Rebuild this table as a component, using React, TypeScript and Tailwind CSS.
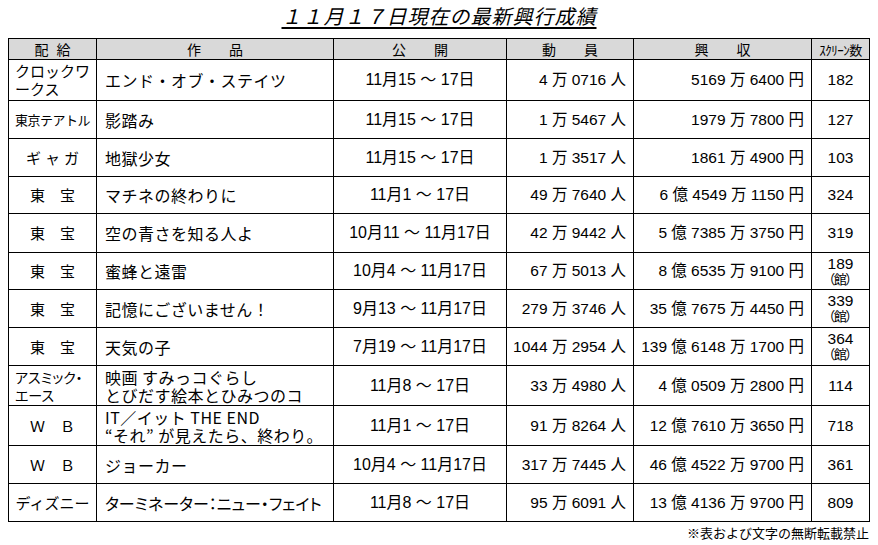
import React from 'react';

// 行データ
type Row = {
  dist: React.ReactNode;
  distLeft?: boolean;
  title: React.ReactNode;
  period: string;
  audience: string;
  gross: string;
  screens: string;
  kan?: boolean;
};

const rows: Row[] = [
  {
    dist: (<>クロックワ<br />ークス</>),
    distLeft: true,
    title: 'エンド・オブ・ステイツ',
    period: '11月15 ～ 17日',
    audience: '4 万 0716 人',
    gross: '5169 万 6400 円',
    screens: '182',
  },
  {
    dist: <span className="text-[13px] tracking-[-0.5px]">東京テアトル</span>,
    title: '影踏み',
    period: '11月15 ～ 17日',
    audience: '1 万 5467 人',
    gross: '1979 万 7800 円',
    screens: '127',
  },
  {
    dist: <span className="tracking-[4px] pl-[4px]">ギャガ</span>,
    title: '地獄少女',
    period: '11月15 ～ 17日',
    audience: '1 万 3517 人',
    gross: '1861 万 4900 円',
    screens: '103',
  },
  { dist: '東　宝', title: 'マチネの終わりに', period: '11月1 ～ 17日', audience: '49 万 7640 人', gross: '6 億 4549 万 1150 円', screens: '324' },
  { dist: '東　宝', title: '空の青さを知る人よ', period: '10月11 ～ 11月17日', audience: '42 万 9442 人', gross: '5 億 7385 万 3750 円', screens: '319' },
  { dist: '東　宝', title: '蜜蜂と遠雷', period: '10月4 ～ 11月17日', audience: '67 万 5013 人', gross: '8 億 6535 万 9100 円', screens: '189', kan: true },
  { dist: '東　宝', title: '記憶にございません！', period: '9月13 ～ 11月17日', audience: '279 万 3746 人', gross: '35 億 7675 万 4450 円', screens: '339', kan: true },
  { dist: '東　宝', title: '天気の子', period: '7月19 ～ 11月17日', audience: '1044 万 2954 人', gross: '139 億 6148 万 1700 円', screens: '364', kan: true },
  {
    dist: (<span className="text-[14px] [font-feature-settings:'palt']">アスミック・<br />エース</span>),
    distLeft: true,
    title: (<>映画 すみっコぐらし<br />とびだす絵本とひみつのコ</>),
    period: '11月8 ～ 17日',
    audience: '33 万 4980 人',
    gross: '4 億 0509 万 2800 円',
    screens: '114',
  },
  {
    dist: 'Ｗ　Ｂ',
    title: (<>IT／イット THE END<br />“それ” が見えたら、終わり。</>),
    period: '11月1 ～ 17日',
    audience: '91 万 8264 人',
    gross: '12 億 7610 万 3650 円',
    screens: '718',
  },
  { dist: 'Ｗ　Ｂ', title: 'ジョーカー', period: '10月4 ～ 11月17日', audience: '317 万 7445 人', gross: '46 億 4522 万 9700 円', screens: '361' },
  {
    dist: 'ディズニー',
    title: <span className="[font-feature-settings:'palt'] tracking-[0px]">ターミネーター：ニュー・フェイト</span>,
    period: '11月8 ～ 17日',
    audience: '95 万 6091 人',
    gross: '13 億 4136 万 9700 円',
    screens: '809',
  },
];

const jp = "font-['Noto_Sans_CJK_JP',sans-serif]";
const num = "font-['Liberation_Sans','Noto_Sans_CJK_JP',sans-serif]";

export default function App() {
  return (
    <div className={`w-[878px] h-[545px] bg-white text-black ${jp}`}>
      {/* タイトル */}
      <div className="h-[38px] flex justify-center pt-[4px]">
        <h1 className="text-[20px] leading-[24px] italic tracking-[1px] underline decoration-[1.5px] underline-offset-[3px]">
          １１月１７日現在の最新興行成績
        </h1>
      </div>

      {/* 表 */}
      <div className="ml-[8px] w-[862px] grid bg-black p-px gap-px grid-cols-[87px_236px_172px_126px_177px_57px] grid-rows-[20px_40px_37px_37px_36px_38px_36px_37px_37px_39px_39px_37px_37px]">
        {/* ヘッダー */}
        <div className="bg-[#d9d9d9] flex items-center justify-center text-[14px] leading-none">配<span className="inline-block w-[8px]" />給</div>
        <div className="bg-[#d9d9d9] flex items-center justify-center text-[14px] leading-none">作　　品</div>
        <div className="bg-[#d9d9d9] flex items-center justify-center text-[14px] leading-none">公　　開</div>
        <div className="bg-[#d9d9d9] flex items-center justify-center text-[14px] leading-none">動　　員</div>
        <div className="bg-[#d9d9d9] flex items-center justify-center text-[14px] leading-none">興　　収</div>
        <div className="bg-[#d9d9d9] flex items-center justify-center text-[13px] leading-none tracking-[-0.5px]">ｽｸﾘｰﾝ数</div>

        {rows.map((r, i) => (
          <React.Fragment key={i}>
            <div
              className={`bg-white flex items-center text-[15px] leading-[18px] whitespace-nowrap ${
                r.distLeft ? 'justify-start pl-[6px]' : 'justify-center'
              }`}
            >
              <div>{r.dist}</div>
            </div>
            <div className="bg-white flex items-center pl-[8px] text-[16px] leading-[18px] tracking-[0.5px] whitespace-nowrap">
              <div>{r.title}</div>
            </div>
            <div className={`bg-white flex items-center justify-center text-[16px] whitespace-pre ${num}`}>{r.period}</div>
            <div className={`bg-white flex items-center justify-end pr-[7px] text-[15.5px] whitespace-pre ${num}`}>{r.audience}</div>
            <div className={`bg-white flex items-center justify-end pr-[7px] text-[15.5px] whitespace-pre ${num}`}>{r.gross}</div>
            <div className={`bg-white flex flex-col items-center justify-center ${num}`}>
              <span className="text-[15.5px] leading-[16px]">{r.screens}</span>
              {r.kan && <span className="text-[13px] leading-[15px] tracking-[-1.5px] pr-[2px]">（館）</span>}
            </div>
          </React.Fragment>
        ))}
      </div>

      {/* 注記 */}
      <div className="w-[869px] flex justify-end pt-[2px] text-[13px] leading-[18px]">
        ※表および文字の無断転載禁止
      </div>
    </div>
  );
}
